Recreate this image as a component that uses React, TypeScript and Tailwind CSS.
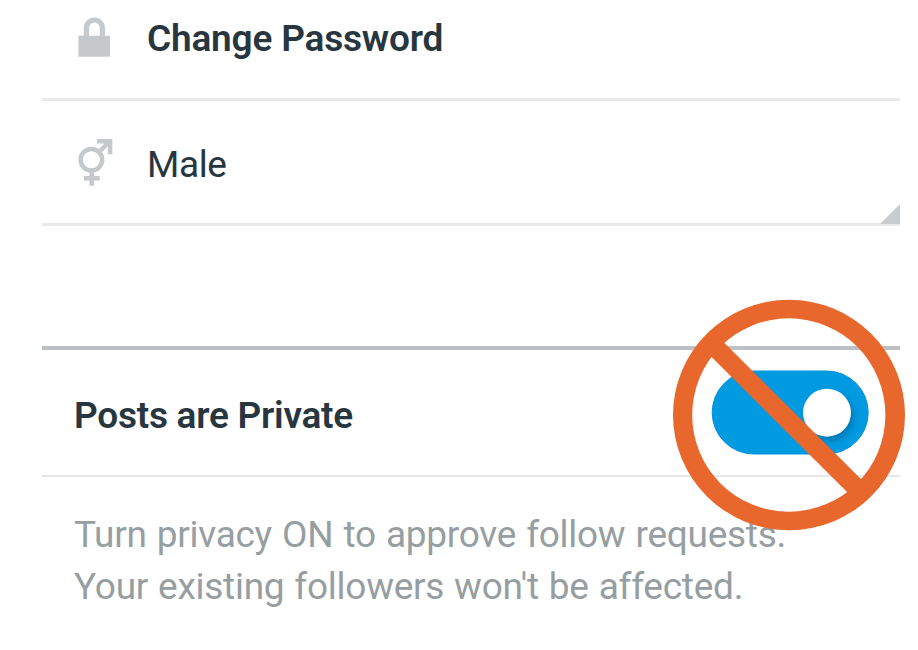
import React from 'react';

function LockIcon() {
  return (
    <svg width="32" height="40" viewBox="78 17 32 40" className="block">
      <path d="M86.4 37V28a8 8 0 0 1 16 0v9" fill="none" stroke="#c5c9cc" strokeWidth="5.2" />
      <path d="M78.4 35.7H110V56.7H78.4z" fill="#c5c9cc" />
    </svg>
  );
}

function GenderIcon() {
  return (
    <svg width="36" height="48" viewBox="78 138 36 48" className="block" fill="none" stroke="#c5c9cc" strokeWidth="4.5">
      <circle cx="91.4" cy="159.7" r="10.8" />
      <path d="M98.5 152.5L110 141M97 141.2h13.1v13M91.7 170.5v15.2M84 178.2h15.8" />
    </svg>
  );
}

export default function App() {
  return (
    <main className="relative h-[650px] w-[918px] overflow-hidden bg-white pl-[42px] pr-[18px] font-['Roboto',sans-serif] text-[37px] leading-[52px] whitespace-nowrap text-[#27363f]">
      <section className="flex h-[101px] border-b-3 border-[#e9eaeb]">
        <div className="w-[105px] pl-9 pt-[17px]"><LockIcon /></div>
        <h2 className="pt-[13px] font-semibold tracking-[-0.2px]">Change Password</h2>
      </section>
      <section className="relative flex h-[125px] border-b-3 border-[#e9eaeb]">
        <div className="w-[105px] pl-9 pt-[37px]"><GenderIcon /></div>
        <p className="pt-[38px] tracking-[-0.4px]">Male</p>
        <svg className="absolute -bottom-[1px] right-0" width="20" height="20"><path d="M20 0v20H0z" fill="#c9cdd0" /></svg>
      </section>
      <div className="h-[124px] border-b-4 border-[#bcc1c4]" />
      <section className="h-[127px] border-b-2 border-[#e6e7e8] pl-8 pt-10">
        <h2 className="font-semibold tracking-[-0.25px]">Posts are Private</h2>
      </section>
      <section className="pl-8 pt-8 text-[#969ea2]">
        <p className="tracking-[-0.28px] [word-spacing:1.3px]">Turn privacy ON to approve follow requests.</p>
        <p className="tracking-[-0.25px] [word-spacing:1px]">Your existing followers won't be affected.</p>
      </section>
      <svg className="absolute left-[672px] top-[298px]" width="234" height="234" viewBox="672 298 234 234">
        <defs>
          <clipPath id="track"><rect x="711.7" y="370.6" width="157" height="84" rx="42" /></clipPath>
          <filter id="soft"><feGaussianBlur stdDeviation="3" /></filter>
        </defs>
        <rect x="712.2" y="371" width="156" height="83" rx="41.5" fill="#009ae1" stroke="#0091dc" />
        <g clipPath="url(#track)">
          <circle cx="830" cy="417" r="24" fill="#006fa8" opacity=".75" filter="url(#soft)" />
        </g>
        <circle cx="827" cy="412.7" r="24" fill="white" />
        <path fill="#e7672c" fillRule="evenodd" d="M673 415a116 115.2 0 0 1 232 0a116 115.2 0 0 1-232 0zM692.2 415a96.6 96.7 0 0 0 193.2 0a96.6 96.7 0 0 0-193.2 0z" />
        <path d="M711 343.1L861.5 493" stroke="#e7672c" strokeWidth="19" />
      </svg>
    </main>
  );
}
